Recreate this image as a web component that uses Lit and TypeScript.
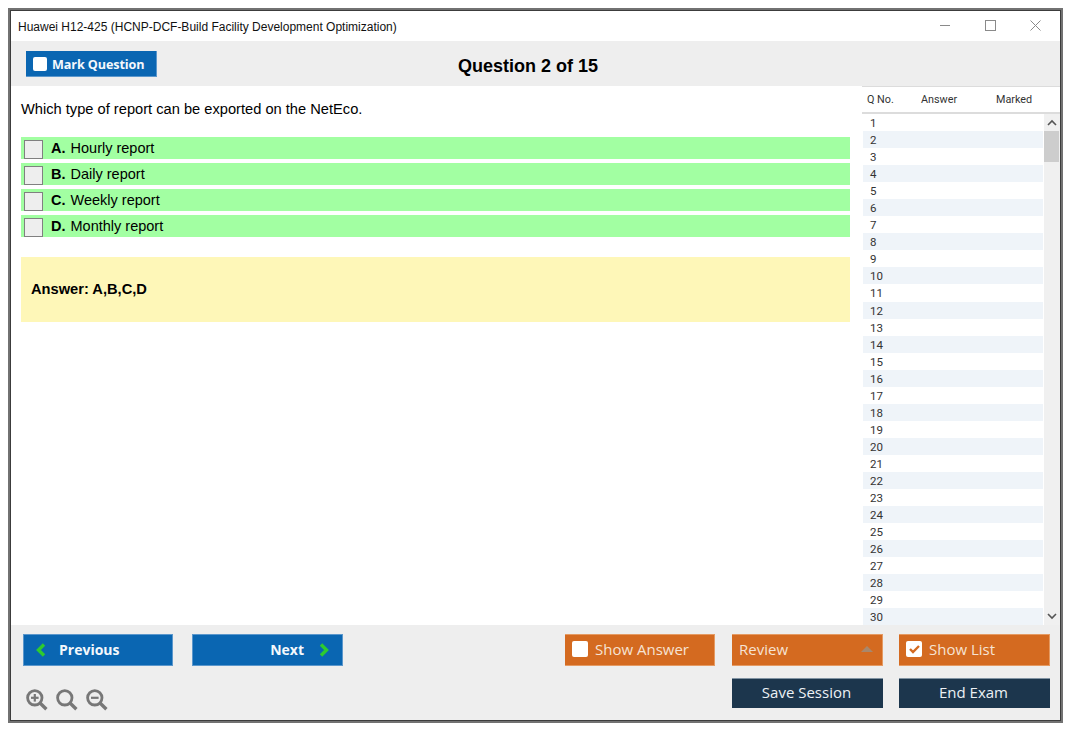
import { LitElement, html, css, svg } from "lit";
import { customElement } from "lit/decorators.js";

const OPTIONS = [
  ["A.", "Hourly report"],
  ["B.", "Daily report"],
  ["C.", "Weekly report"],
  ["D.", "Monthly report"],
];

const magnifier = (kind: "plus" | "none" | "minus") => svg`
  <svg class="zoom-icon" width="22" height="22" viewBox="0 0 22 22" fill="none" stroke="#777" stroke-width="2.8">
    <circle cx="8.8" cy="8.8" r="7.2"></circle>
    <path d="M14 14 L20.4 20.2" stroke-width="3.4"></path>
    ${kind !== "none" ? svg`<path d="M5 8.8 H12.6" stroke-width="2.2"></path>` : ""}
    ${kind === "plus" ? svg`<path d="M8.8 5 V12.6" stroke-width="2.2"></path>` : ""}
  </svg>`;

@customElement("app-root")
export class AppRoot extends LitElement {
  static styles = css`
    :host { display: block; width: 1075px; height: 735px; padding: 8px 12px 12px 8px; box-sizing: border-box; background: #fff; font-family: "Liberation Sans", Arial, sans-serif; color: #000; }
    .outer { height: 100%; box-sizing: border-box; border: 2px solid #727272; }
    .window { height: 100%; box-sizing: border-box; border: 1px solid #3c3c3c; display: flex; flex-direction: column; background: #fff; }
    .titlebar { height: 30px; flex: none; display: flex; align-items: center; padding-left: 7px; font-size: 12px; color: #111; }
    .title { flex: 1; padding-top: 2px; }
    .winctl { display: flex; gap: 30px; padding-right: 17px; align-items: center; padding-bottom: 2px; }
    .winctl svg { display: block; }
    .toolbar { height: 45px; flex: none; background: #eee; display: flex; align-items: center; padding-left: 15px; }
    .mark { width: 131px; height: 26px; box-sizing: border-box; background: #0a66b2; border: 1px solid #5b97cc; border-width: 0 1px 1px 0; color: #f4f8fc; font: 700 12.6px "Open Sans", sans-serif; display: flex; align-items: center; gap: 5px; padding: 1px 0 0 7px; margin-top: 1px; letter-spacing: -0.1px; }
    .mark .box { margin-top: -1px; }
    .box { width: 14px; height: 14px; background: #fff; border-radius: 2px; flex: none; }
    .heading { margin-left: 301px; font-size: 18px; font-weight: 700; margin-top: 5px; }
    .main { flex: 1; display: flex; min-height: 0; }
    .content { flex: 1; padding: 0 11px 0 10px; min-width: 0; }
    .question { font-size: 14.67px; height: 51px; padding-top: 14px; box-sizing: border-box; line-height: 18px; }
    .options { display: flex; flex-direction: column; gap: 4px; }
    .option { height: 22px; background: #a2ffa2; display: flex; align-items: flex-end; padding-left: 3px; font-size: 14.5px; }
    .check { width: 19px; height: 19px; box-sizing: border-box; background: #eee; border: 1px solid #808080; flex: none; margin-right: 8px; }
    .option span { align-self: center; }
    .option b { margin-right: 1px; }
    .answer { margin-top: 20px; height: 65px; background: #fef7b8; display: flex; align-items: center; padding-left: 10px; padding-bottom: 2px; box-sizing: border-box; font-size: 14.67px; font-weight: 700; }
    .side { width: 199px; flex: none; display: flex; flex-direction: column; border-left: 2px solid #fff; box-sizing: border-box; }
    .side-head { height: 28px; flex: none; box-sizing: border-box; border-top: 1px solid #dcdcdc; border-bottom: 2px solid #dcdcdc; display: grid; grid-template-columns: 54px 75px auto; padding-left: 5px; align-items: center; font: 10.8px Roboto, sans-serif; color: #333; margin-left: -1px; }
    .side-body { flex: 1; display: flex; min-height: 0; overflow: hidden; }
    .rows { flex: 1; display: flex; flex-direction: column; }
    .row { height: 17.05px; flex: none; padding-left: 7px; font: 11.5px/19px Roboto, sans-serif; color: #333; }
    .row.alt { background: #eff4f9; }
    .scroll { width: 16px; margin-left: 1px; flex: none; background: #f0f0f0; position: relative; }
    .thumb { position: absolute; left: 0; top: 17px; width: 15px; height: 31px; background: #cdcdcd; }
    .arrow { position: absolute; left: 3px; }
    .footer { height: 95px; flex: none; background: #eee; display: grid; grid-template-columns: 150px 150px 1fr 151px 151px 151px; grid-template-rows: 32px 30px; column-gap: 16px; row-gap: 12px; padding: 9px 10px 0 12px; box-sizing: border-box; align-items: start; }
    .btn { box-sizing: border-box; height: 32px; display: flex; align-items: center; font: 15px "Open Sans", sans-serif; }
    .nav { background: #0a66b2; border: 1px solid #5b97cc; color: #f4f8fc; font-weight: 700; font-size: 14px; padding-bottom: 1px; }
    .prev { padding-left: 12px; gap: 13px; }
    .next { justify-content: flex-end; padding-right: 13px; gap: 15px; margin-left: 3px; width: 151px; }
    .orange { background: #d46a20; border: 1px solid #e59a62; border-width: 1px 1px 1px 0; color: #f6e3d4; padding: 0 0 2px 7px; gap: 7px; }
    .orange .box { width: 16px; height: 16px; }
    .show-answer { width: 150px; }
    .review { justify-content: space-between; padding-right: 9px; }
    .dark { background: #1c364d; color: #ecf1f5; justify-content: center; height: 30px; border-top: 1px solid #8193a3; padding: 0 2px 3px 0; }
    .tools { grid-column: 1 / 3; display: flex; gap: 8px; padding-left: 3px; margin-top: 11px; }
  `;

  render() {
    return html`
      <div class="outer"><div class="window">
        <div class="titlebar">
          <div class="title">Huawei H12-425 (HCNP-DCF-Build Facility Development Optimization)</div>
          <div class="winctl">
            <svg width="15" height="11" viewBox="0 0 15 11"><path d="M2 5.5H12" stroke="#8a8a8a" fill="none"></path></svg>
            <svg width="15" height="11" viewBox="0 0 15 11"><rect x="2.5" y="0.5" width="10" height="10" stroke="#8a8a8a" fill="none"></rect></svg>
            <svg width="15" height="11" viewBox="0 0 15 11"><path d="M2.5 0.5L12.5 10.5M12.5 0.5L2.5 10.5" stroke="#8a8a8a" fill="none"></path></svg>
          </div>
        </div>
        <div class="toolbar">
          <div class="mark"><span class="box"></span>Mark Question</div>
          <div class="heading">Question 2 of 15</div>
        </div>
        <div class="main">
          <div class="content">
            <div class="question">Which type of report can be exported on the NetEco.</div>
            <div class="options">
              ${OPTIONS.map(([l, t]) => html`<div class="option"><div class="check"></div><span><b>${l}</b> ${t}</span></div>`)}
            </div>
            <div class="answer">Answer: A,B,C,D</div>
          </div>
          <div class="side">
            <div class="side-head"><span>Q No.</span><span>Answer</span><span>Marked</span></div>
            <div class="side-body">
              <div class="rows">
                ${Array.from({ length: 30 }, (_, i) => html`<div class="row ${i % 2 ? "alt" : ""}">${i + 1}</div>`)}
              </div>
              <div class="scroll">
                <svg class="arrow" style="top:5px" width="10" height="8" viewBox="0 0 10 8"><path d="M1 6L5 2L9 6" fill="none" stroke="#555" stroke-width="1.6"></path></svg>
                <div class="thumb"></div>
                <svg class="arrow" style="bottom:5px" width="10" height="8" viewBox="0 0 10 8"><path d="M1 2L5 6L9 2" fill="none" stroke="#555" stroke-width="1.6"></path></svg>
              </div>
            </div>
          </div>
        </div>
        <div class="footer">
          <div class="btn nav prev">
            <svg width="10" height="14" viewBox="0 0 10 14"><path d="M8 1.5L2.5 7L8 12.5" fill="none" stroke="#2ecb2e" stroke-width="3.4"></path></svg>
            Previous
          </div>
          <div class="btn nav next">
            Next
            <svg width="10" height="14" viewBox="0 0 10 14"><path d="M2 1.5L7.5 7L2 12.5" fill="none" stroke="#2ecb2e" stroke-width="3.4"></path></svg>
          </div>
          <div class="btn orange show-answer" style="grid-column:4"><span class="box"></span>Show Answer</div>
          <div class="btn orange review" style="grid-column:5">Review
            <svg width="12" height="6" viewBox="0 0 12 6"><path d="M0 6L6 0L12 6Z" fill="#a8876c"></path></svg>
          </div>
          <div class="btn orange" style="grid-column:6"><span class="box" style="display:flex;align-items:center;justify-content:center">
            <svg width="11" height="10" viewBox="0 0 11 10"><path d="M1 5L4 8L10 2" fill="none" stroke="#d46a20" stroke-width="2.4"></path></svg>
          </span>Show List</div>
          <div class="tools">${magnifier("plus")}${magnifier("none")}${magnifier("minus")}</div>
          <div class="btn dark" style="grid-column:5">Save Session</div>
          <div class="btn dark" style="grid-column:6">End Exam</div>
        </div>
      </div></div>
    `;
  }
}
